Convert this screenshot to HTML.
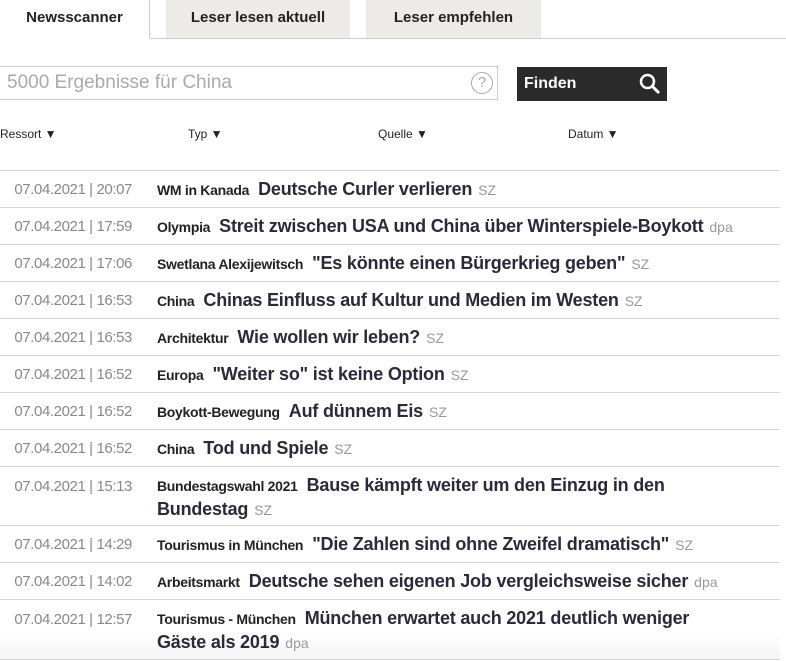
<!DOCTYPE html>
<html><head><meta charset="utf-8"><style>
*{margin:0;padding:0;box-sizing:border-box}
body{width:786px;height:661px;overflow:hidden;background:#fff;font-family:"Liberation Sans Narrow","Liberation Sans",sans-serif;color:#2a2a36;position:relative}
.tab{position:absolute;top:0;height:38px;font-weight:bold;font-size:15px;text-align:center;line-height:36px;color:#222}
.t2,.t3{background:#ecebe7}
.abs{position:absolute}
.h{position:absolute;top:127px;font-size:12px;color:#222}
.row{position:absolute;left:0;width:780px;border-bottom:1px solid #d6d6d6}
.d{position:absolute;right:648px;font-size:15px;letter-spacing:-0.4px;color:#888;white-space:nowrap}
.c{position:absolute;left:157px;width:600px;line-height:22px}
.cat{font-weight:bold;font-size:14px;color:#222;margin-right:9px;letter-spacing:-0.3px}
.ti{font-weight:bold;font-size:18px;color:#2a2a3a;margin-right:6px;letter-spacing:-0.2px}
.s{font-size:14px;color:#999}
</style></head><body>
<div class="tab" style="left:0;width:150px;border-right:1px solid #ccc">Newsscanner</div>
<div class="tab t2" style="left:166px;width:184px">Leser lesen aktuell</div>
<div class="tab t3" style="left:366px;width:175px">Leser empfehlen</div>
<div class="abs" style="left:150px;top:38px;width:636px;height:1px;background:#ccc"></div>
<div class="abs" style="left:-1px;top:66px;width:499px;height:34px;border:1px solid #ccc;font-size:19px;color:#aaa;line-height:32px;padding-left:7px">5000 Ergebnisse für China</div>
<div class="abs" style="left:471px;top:72px;width:22px;height:22px;border:1px solid #aaa;border-radius:50%;text-align:center;line-height:20px;color:#aaa;font-size:15px">?</div>
<div class="abs" style="left:517px;top:67px;width:150px;height:34px;background:#2a2a2a;color:#fff;font-weight:bold;font-size:16px;line-height:34px;padding-left:7px">Finden
<svg style="position:absolute;left:122px;top:6px" width="22" height="22" viewBox="0 0 22 22"><circle cx="8.5" cy="8.5" r="6.5" fill="none" stroke="#fff" stroke-width="2.5"/><path d="M13 13l7 7" stroke="#fff" stroke-width="3"/></svg></div>
<div class="h" style="left:0">Ressort ▼</div>
<div class="h" style="left:188px">Typ ▼</div>
<div class="h" style="left:378px">Quelle ▼</div>
<div class="h" style="left:568px">Datum ▼</div>
<div class="abs" style="left:0;top:170px;width:780px;height:1px;background:#d6d6d6"></div>

<div class="row" style="top:171px;height:37px"><span class="d" style="top:10px">07.04.2021 | 20:07</span><div class="c" style="top:7px"><span class="cat">WM in Kanada</span><span class="ti">Deutsche Curler verlieren</span><span class="s">SZ</span></div></div>
<div class="row" style="top:208px;height:37px"><span class="d" style="top:10px">07.04.2021 | 17:59</span><div class="c" style="top:7px;width:625px"><span class="cat">Olympia</span><span class="ti">Streit zwischen USA und China über Winterspiele-Boykott</span><span class="s">dpa</span></div></div>
<div class="row" style="top:245px;height:37px"><span class="d" style="top:10px">07.04.2021 | 17:06</span><div class="c" style="top:7px"><span class="cat">Swetlana Alexijewitsch</span><span class="ti">"Es könnte einen Bürgerkrieg geben"</span><span class="s">SZ</span></div></div>
<div class="row" style="top:282px;height:37px"><span class="d" style="top:10px">07.04.2021 | 16:53</span><div class="c" style="top:7px"><span class="cat">China</span><span class="ti">Chinas Einfluss auf Kultur und Medien im Westen</span><span class="s">SZ</span></div></div>
<div class="row" style="top:319px;height:37px"><span class="d" style="top:10px">07.04.2021 | 16:53</span><div class="c" style="top:7px"><span class="cat">Architektur</span><span class="ti">Wie wollen wir leben?</span><span class="s">SZ</span></div></div>
<div class="row" style="top:356px;height:37px"><span class="d" style="top:10px">07.04.2021 | 16:52</span><div class="c" style="top:7px"><span class="cat">Europa</span><span class="ti">"Weiter so" ist keine Option</span><span class="s">SZ</span></div></div>
<div class="row" style="top:393px;height:37px"><span class="d" style="top:10px">07.04.2021 | 16:52</span><div class="c" style="top:7px"><span class="cat">Boykott-Bewegung</span><span class="ti">Auf dünnem Eis</span><span class="s">SZ</span></div></div>
<div class="row" style="top:430px;height:37px"><span class="d" style="top:10px">07.04.2021 | 16:52</span><div class="c" style="top:7px"><span class="cat">China</span><span class="ti">Tod und Spiele</span><span class="s">SZ</span></div></div>
<div class="row" style="top:467px;height:59px"><span class="d" style="top:11px">07.04.2021 | 15:13</span><div class="c" style="top:7px;width:560px"><span class="cat">Bundestagswahl 2021</span><span class="ti">Bause kämpft weiter um den Einzug in den Bundestag</span><span class="s">SZ</span></div></div>
<div class="row" style="top:526px;height:37px"><span class="d" style="top:10px">07.04.2021 | 14:29</span><div class="c" style="top:7px"><span class="cat">Tourismus in München</span><span class="ti">"Die Zahlen sind ohne Zweifel dramatisch"</span><span class="s">SZ</span></div></div>
<div class="row" style="top:563px;height:37px"><span class="d" style="top:10px">07.04.2021 | 14:02</span><div class="c" style="top:7px"><span class="cat">Arbeitsmarkt</span><span class="ti">Deutsche sehen eigenen Job vergleichsweise sicher</span><span class="s">dpa</span></div></div>
<div class="row" style="top:600px;height:60px;background:linear-gradient(#fff 55%,#f5f5f5)"><span class="d" style="top:11px">07.04.2021 | 12:57</span><div class="c" style="top:7px;width:580px"><span class="cat">Tourismus - München</span><span class="ti">München erwartet auch 2021 deutlich weniger Gäste als 2019</span><span class="s">dpa</span></div></div>
</body></html>
